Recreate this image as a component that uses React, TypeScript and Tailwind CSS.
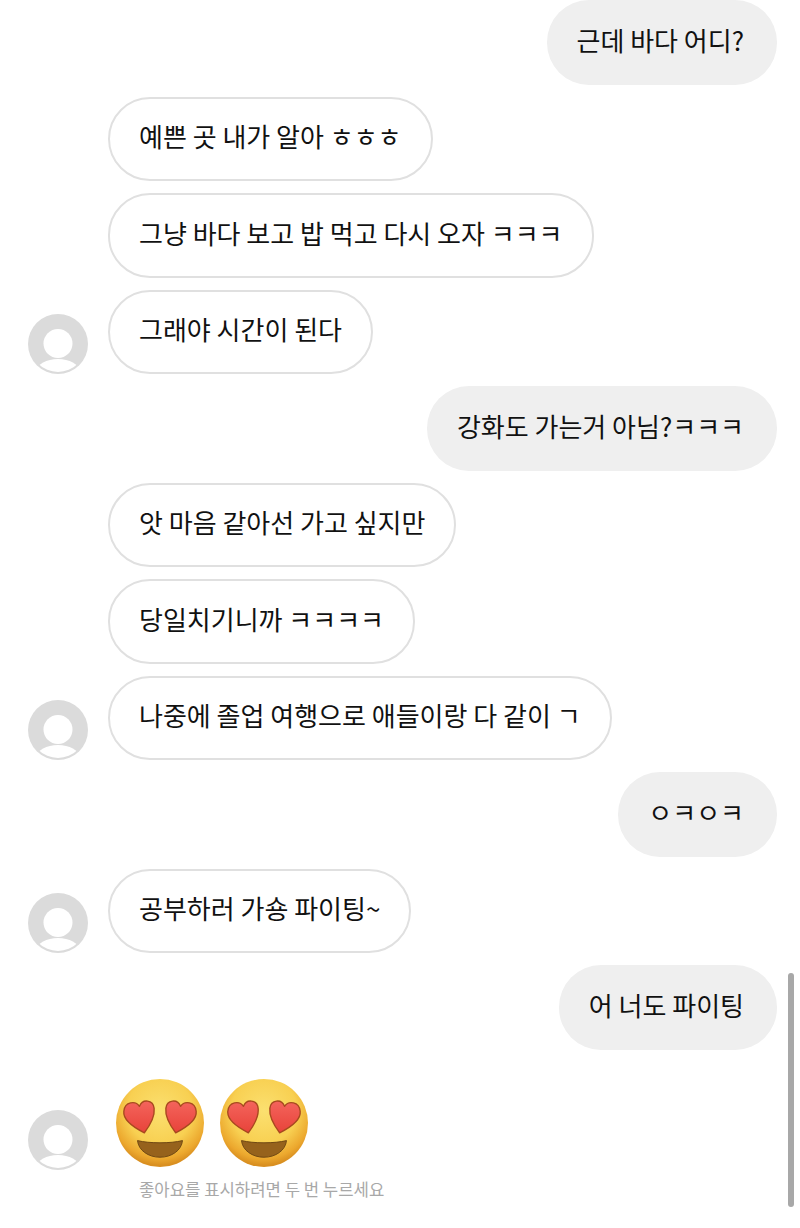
import React from 'react';

type Message = {
  text: string;
  mine?: boolean;
  avatar?: boolean;
};

const MESSAGES: Message[] = [
  { text: '근데 바다 어디?', mine: true },
  { text: '예쁜 곳 내가 알아 ㅎㅎㅎ' },
  { text: '그냥 바다 보고 밥 먹고 다시 오자 ㅋㅋㅋ' },
  { text: '그래야 시간이 된다', avatar: true },
  { text: '강화도 가는거 아님?ㅋㅋㅋ', mine: true },
  { text: '앗 마음 같아선 가고 싶지만' },
  { text: '당일치기니까 ㅋㅋㅋㅋ' },
  { text: '나중에 졸업 여행으로 애들이랑 다 같이 ㄱ', avatar: true },
  { text: 'ㅇㅋㅇㅋ', mine: true },
  { text: '공부하러 가숑 파이팅~', avatar: true },
  { text: '어 너도 파이팅', mine: true },
];

function Avatar() {
  return (
    <svg viewBox="0 0 60 60" className="h-[60px] w-[60px] shrink-0">
      <defs>
        <clipPath id="avatar-clip">
          <circle cx="30" cy="30" r="28" />
        </clipPath>
      </defs>
      <circle cx="30" cy="30" r="30" fill="#dbdbdb" />
      <g clipPath="url(#avatar-clip)">
        <circle cx="30" cy="29.5" r="14.5" fill="#fff" />
        <ellipse cx="30" cy="57" rx="21" ry="12" fill="#fff" />
      </g>
    </svg>
  );
}

function HeartEyes({ id }: { id: string }) {
  const heart = 'M24 28C20 22 9 23 8 33C7 42 17 49 29 55C35 47 40 39 39 30C38 21 27 20 24 28Z';
  return (
    <svg viewBox="0 0 90 90" className="h-[88px] w-[88px] shrink-0">
      <defs>
        <radialGradient id={`${id}-face`} cx="50%" cy="36%" r="62%">
          <stop offset="0%" stopColor="#fbe070" />
          <stop offset="60%" stopColor="#f8d052" />
          <stop offset="88%" stopColor="#eca82e" />
          <stop offset="100%" stopColor="#d98f20" />
        </radialGradient>
        <linearGradient id={`${id}-heart`} x1="0" y1="0" x2="0" y2="1">
          <stop offset="0%" stopColor="#f4645c" />
          <stop offset="100%" stopColor="#e8433a" />
        </linearGradient>
      </defs>
      <circle cx="45" cy="45" r="45" fill={`url(#${id}-face)`} />
      <g fill={`url(#${id}-heart)`} stroke="#a8491f" strokeWidth="1.4" strokeLinejoin="round">
        <path d={heart} />
        <path d={heart} transform="translate(90 0) scale(-1 1)" />
      </g>
      <path d="M22 63C34 66 56 66 68 63C67 73 57 80 45 80C33 80 23 73 22 63Z" fill="#96621c" stroke="#6e4712" strokeWidth="1" />
    </svg>
  );
}

function Bubble({ text, mine }: Message) {
  return (
    <div
      className={
        mine
          ? 'flex h-[84.5px] items-center rounded-[42px] bg-[#efefef] pb-[6px] pl-[30px] pr-[33px] text-[26px] text-[#111]'
          : 'flex h-[84.5px] items-center rounded-[42px] border-2 border-[#e0e0e0] bg-white px-[29px] pb-[6px] text-[26px] text-[#111]'
      }
    >
      {text}
    </div>
  );
}

export default function App() {
  return (
    <div className="relative h-[1228px] w-[800px] overflow-hidden bg-white font-['Noto_Sans_CJK_KR','Noto_Sans',sans-serif]">
      <div className="flex flex-col gap-[12px] pl-[28px] pr-[23px]">
        {MESSAGES.map((m) =>
          m.mine ? (
            <div key={m.text} className="flex justify-end">
              <Bubble {...m} />
            </div>
          ) : (
            <div key={m.text} className="flex items-end gap-[20px]">
              {m.avatar ? <Avatar /> : <div className="w-[60px] shrink-0" />}
              <Bubble {...m} />
            </div>
          ),
        )}
        <div className="flex items-start gap-[20px]">
          <div className="mt-[48px]">
            <Avatar />
          </div>
          <div className="pt-[17px]">
            <div className="flex gap-[16px] pl-[8px]">
              <HeartEyes id="a" />
              <HeartEyes id="b" />
            </div>
            <p className="mt-[10px] pl-[31px] text-[16.7px] text-[#a8a8a8]">좋아요를 표시하려면 두 번 누르세요</p>
          </div>
        </div>
      </div>
      {/* overlay scrollbar */}
      <div className="absolute left-[788px] top-[973px] h-[234px] w-[6px] rounded-full bg-[#a8a8a8]" />
    </div>
  );
}
